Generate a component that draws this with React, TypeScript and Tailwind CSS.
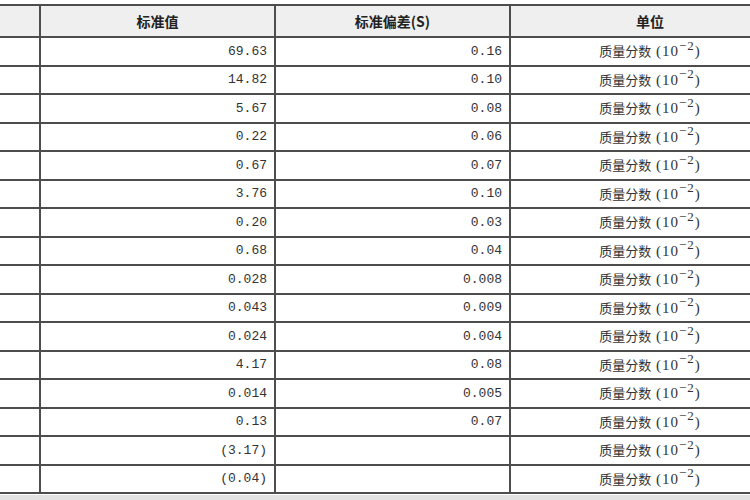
import React from 'react';

const ROWS = [
  { value: '69.63', sd: '0.16' },
  { value: '14.82', sd: '0.10' },
  { value: '5.67', sd: '0.08' },
  { value: '0.22', sd: '0.06' },
  { value: '0.67', sd: '0.07' },
  { value: '3.76', sd: '0.10' },
  { value: '0.20', sd: '0.03' },
  { value: '0.68', sd: '0.04' },
  { value: '0.028', sd: '0.008' },
  { value: '0.043', sd: '0.009' },
  { value: '0.024', sd: '0.004' },
  { value: '4.17', sd: '0.08' },
  { value: '0.014', sd: '0.005' },
  { value: '0.13', sd: '0.07' },
  { value: '(3.17)', sd: '' },
  { value: '(0.04)', sd: '' },
];

const cell = 'border-2 border-[#4d4d4d] p-0';
const mono = "font-['Liberation_Mono',monospace] text-[13px] text-[#333]";

export default function App() {
  return (
    <div className="w-[750px] h-[500px] overflow-hidden bg-white">
      <div className="pt-[4px] h-[495px] overflow-hidden">
        <table className="border-collapse table-fixed w-[850px] ml-[-61px]">
          <colgroup>
            <col className="w-[100px]" />
            <col className="w-[235px]" />
            <col className="w-[235px]" />
            <col className="w-[280px]" />
          </colgroup>
          <thead>
            <tr className="h-[32px] bg-[#efefef]">
              <th className={cell}></th>
              {['标准值', '标准偏差(S)', '单位'].map((h) => (
                <th
                  key={h}
                  className={`${cell} text-center font-bold text-[14px] text-[#222] font-['Noto_Sans_CJK_SC',sans-serif]`}
                >
                  {h}
                </th>
              ))}
            </tr>
          </thead>
          <tbody>
            {ROWS.map((r, i) => (
              <tr key={i} className="h-[28.5px]">
                <td className={cell}></td>
                <td className={`${cell} text-right pr-[7px] ${mono}`}>{r.value}</td>
                <td className={`${cell} text-right pr-[7px] ${mono}`}>{r.sd}</td>
                <td className={`${cell} text-center text-[13px] text-[#333] font-['Noto_Sans_CJK_SC',sans-serif]`}>
                  质量分数<span className="font-['Liberation_Serif',serif] text-[15px] tracking-[1px]"> (10<sup className="text-[13px]">−2</sup>)</span>
                </td>
              </tr>
            ))}
          </tbody>
        </table>
      </div>
      <div className="h-[5px] bg-[#e2e2e2]" />
    </div>
  );
}
